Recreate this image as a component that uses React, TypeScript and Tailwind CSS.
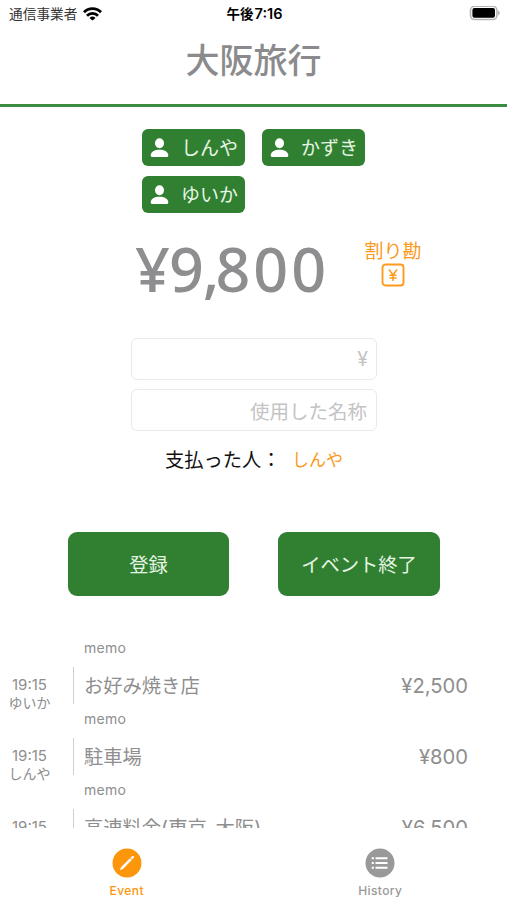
import { useState } from 'react';

interface Payment {
  time: string;
  payer: string;
  title: string;
  amount: number;
}

const members = ['しんや', 'かずき', 'ゆいか'];

const payments: Payment[] = [
  { time: '19:15', payer: 'ゆいか', title: 'お好み焼き店', amount: 2500 },
  { time: '19:15', payer: 'しんや', title: '駐車場', amount: 800 },
  { time: '19:15', payer: 'しんや', title: '高速料金(東京-大阪)', amount: 6500 },
];

const yen = (n: number) => `¥${n.toLocaleString('en-US')}`;

function StatusBar() {
  return (
    <div className="h-[27px] shrink-0 grid grid-cols-3 items-center pl-[9px] pr-[7px] text-black">
      <div className="flex items-center gap-[6px]">
        <span className="text-[13.7px] leading-[27px] text-[#333]">通信事業者</span>
        <svg width="19" height="14" viewBox="0 0 19 14" fill="none" stroke="currentColor" strokeWidth="2.8">
          <path d="M1 5.2a12 12 0 0 1 17 0" />
          <path d="M4 8.7a7.8 7.8 0 0 1 11 0" />
          <path d="M9.5 13.6 6.5 10.9a4.3 4.3 0 0 1 6 0z" fill="currentColor" stroke="none" />
        </svg>
      </div>
      <span className="text-center text-[13.5px] leading-[27px] font-bold whitespace-nowrap">
        午後<span className="ml-[1px] text-[14.5px] font-semibold font-['Inter',sans-serif]">7:16</span>
      </span>
      <svg className="justify-self-end" width="31" height="15" viewBox="0 0 31 15">
        <rect x="1.5" y="0.3" width="26.4" height="13.2" rx="4" fill="#fff" stroke="#b5b5b5" strokeWidth="1.6" />
        <rect x="3.4" y="2.1" width="22.6" height="9.6" rx="2" fill="#000" />
        <path d="M29.2 4.5v5c2-.8 2-4.2 0-5z" fill="#aaa" />
      </svg>
    </div>
  );
}

function MemberChip({ name }: { name: string }) {
  return (
    <div className="h-[37px] w-[103px] flex items-center justify-between pl-2 pr-[7px] rounded-[6px] bg-[#318032] text-[#e6f5e3]">
      <svg className="shrink-0" width="19" height="20" viewBox="0 0 19 20" fill="#fff">
        <ellipse cx="9.5" cy="5.2" rx="4.5" ry="5" />
        <path d="M.7 17.5c0-3.700 4-5.700 8.800-5.700s8.800 2 8.800 5.700c0 .9-.6 1.500-1.500 1.500H2.200c-.9 0-1.500-.6-1.500-1.500z" />
      </svg>
      <span className="pb-[2px] text-[19px] leading-[35px]">{name}</span>
    </div>
  );
}

function PaymentRow({ payment }: { payment: Payment }) {
  return (
    <div className="h-[71px] shrink-0 flex text-[#8e8e8e]">
      <div className="w-[59px] pt-[46px] text-center text-[14px] leading-[16px]">
        <p className="text-[15px] font-['Inter',sans-serif]">{payment.time}</p>
        <p className="leading-[18px]">{payment.payer}</p>
      </div>
      <div className="mt-[36px] ml-[14px] h-[37px] w-px bg-[#cfcfcf]" />
      <div className="flex-1 pl-[10px] pr-[39px]">
        <p className="h-[37px] pt-[7px] text-[14px] leading-[20px] tracking-[0.3px] font-['Inter',sans-serif]">memo</p>
        <div className="flex h-[37px] items-center justify-between">
          <span className="text-[19.3px] font-['Inter','Noto_Sans_CJK_JP',sans-serif]">{payment.title}</span>
          <span className="text-[20.2px] font-['Inter',sans-serif]">{yen(payment.amount)}</span>
        </div>
      </div>
    </div>
  );
}

export default function App() {
  const [price, setPrice] = useState('');
  const [name, setName] = useState('');
  const total = payments.reduce((sum, p) => sum + p.amount, 0);
  const [thousands, rest] = yen(total).split(',');

  return (
    <div className="h-[900px] w-[507px] flex flex-col overflow-hidden bg-white font-['Noto_Sans_CJK_JP',sans-serif]">
      <StatusBar />
      <header className="h-[80px] shrink-0 border-b-[3px] border-[#3b8b42] pt-[7px]">
        <h1 className="text-center text-[34px] leading-[50px] font-medium text-[#8b8b8d]">大阪旅行</h1>
      </header>

      <div className="mt-[22px] ml-[142px] flex w-[240px] shrink-0 flex-wrap gap-x-[17px] gap-y-[10px]">
        {members.map(m => <MemberChip key={m} name={m} />)}
      </div>

      {/* Total and split */}
      <div className="mt-[20px] ml-[135px] flex h-[72px] shrink-0">
        <p className="w-[229px] whitespace-nowrap text-[61px] leading-[72px] font-medium text-[#8e8e90] font-['Noto_Sans',sans-serif]">
          <span className="tracking-[-1px]">{thousands}</span>
          <span className="tracking-[-4px]">,</span>
          <span className="tracking-[3px]">{rest}</span>
        </p>
        <button className="flex w-[58px] flex-col items-center pt-[5px] text-[#fb9a1c]">
          <span className="text-[19px] leading-[24px] whitespace-nowrap">割り勘</span>
          <svg className="mt-[1px]" width="24" height="24" viewBox="0 0 24 24" fill="none" stroke="currentColor" strokeWidth="1.9">
            <rect x="1.5" y="1.5" width="21" height="21" rx="3" />
            <path d="M8 6.500l4 5.500 4-5.500M12 12v6M8.500 12.300h7M8.500 15h7" strokeWidth="1.5" />
          </svg>
        </button>
      </div>

      <div className="mt-[33px] ml-[131px] flex w-[246px] shrink-0 flex-col gap-[9px]">
        <input
          value={price}
          onChange={e => setPrice(e.target.value)}
          placeholder="¥"
          className="h-[42px] rounded-[6px] border border-[#e9e9e9] px-[8px] text-right text-[19.5px] placeholder:text-[#c4c4c4] font-['Inter',sans-serif]"
        />
        <input
          value={name}
          onChange={e => setName(e.target.value)}
          placeholder="使用した名称"
          className="h-[42px] rounded-[6px] border border-[#e9e9e9] px-[9px] text-right text-[19.5px] placeholder:text-[#c4c4c4]"
        />
      </div>

      <div className="mt-[14px] flex h-[28px] shrink-0 items-center pl-[165px]">
        <span className="w-[127px] text-[19.3px] text-[#111]">支払った人：</span>
        <span className="text-[17px] text-[#fb9a1c]">しんや</span>
      </div>

      <div className="mt-[59px] flex shrink-0 gap-[49px] pl-[68px]">
        <button className="h-[64px] w-[161px] rounded-[9px] bg-[#318032] text-[19.3px] text-[#e6f5e3]">登録</button>
        <button className="h-[64px] w-[162px] rounded-[9px] bg-[#318032] text-[19.3px] text-[#e6f5e3]">イベント終了</button>
      </div>

      <div className="mt-[35px] flex min-h-0 flex-1 flex-col overflow-hidden">
        {payments.map(p => <PaymentRow key={p.title} payment={p} />)}
      </div>

      <nav className="grid h-[72px] shrink-0 grid-cols-2 bg-white text-[12px] leading-[16px] font-medium tracking-[0.4px] font-['Inter',sans-serif]">
        <div className="flex flex-col items-center pt-[20px] text-[#fc960b]">
          <svg width="30" height="30" viewBox="0 0 30 30">
            <circle cx="15" cy="15" r="14.5" fill="currentColor" />
            <path d="M9.7 20.3 18.9 11.1" stroke="#fff" strokeWidth="2.6" />
            <path d="M20.1 9.900l.7-.7" stroke="#fff" strokeWidth="2.4" strokeLinecap="round" />
            <path d="M8.800 19.400l-.9 2.700 2.700-.9z" fill="#fff" />
          </svg>
          <span className="mt-[5px]">Event</span>
        </div>
        <div className="flex flex-col items-center pt-[20px] text-[#999]">
          <svg width="30" height="30" viewBox="0 0 30 30">
            <circle cx="15" cy="15" r="14.5" fill="currentColor" />
            <path d="M10.500 10.200h12M10.500 15h12M10.500 19.800h12" stroke="#fff" strokeWidth="1.9" />
            <path d="M6.700 10.200h2.200M6.700 15h2.200M6.700 19.800h2.200" stroke="#fff" strokeWidth="2.1" />
          </svg>
          <span className="mt-[5px]">History</span>
        </div>
      </nav>
    </div>
  );
}
